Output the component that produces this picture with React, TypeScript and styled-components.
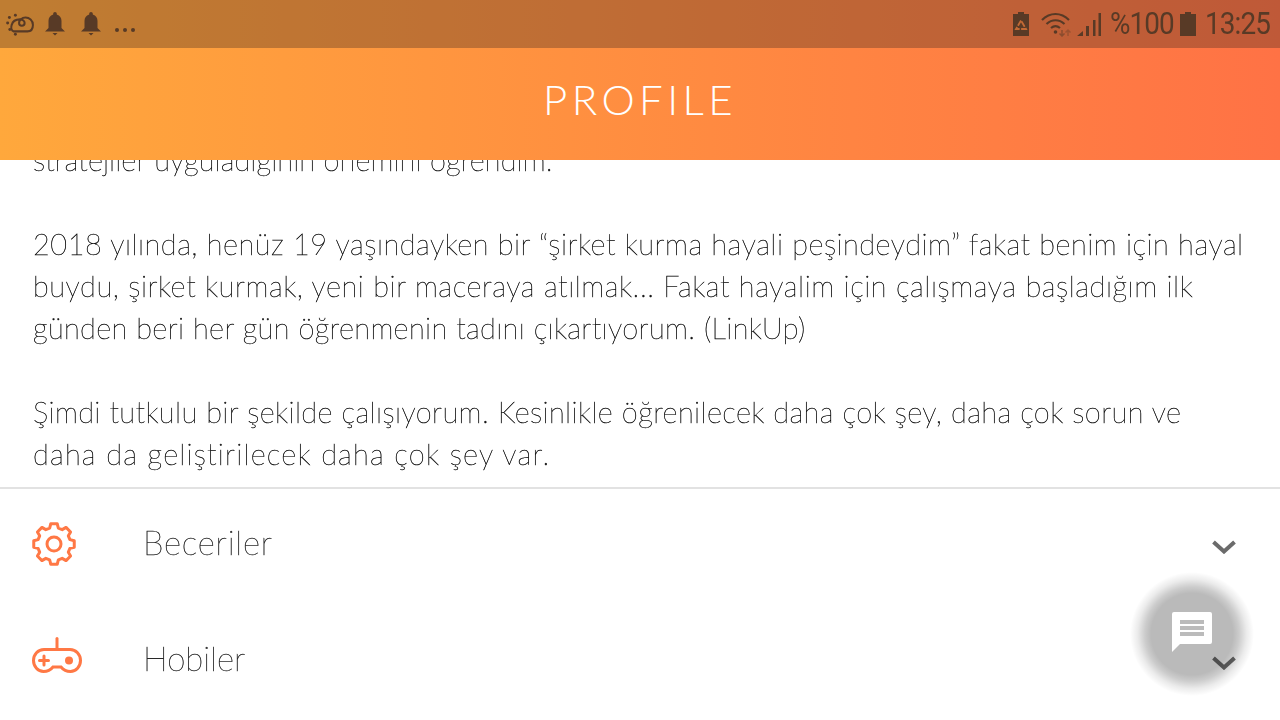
import { createGlobalStyle, styled } from 'styled-components';

const BODY_FONT = '"Lato", "Noto Sans", sans-serif';

const GlobalStyle = createGlobalStyle`
  html, body {
    margin: 0;
    padding: 0;
    background: #fff;
  }
`;

const Screen = styled.div`
  position: relative;
  width: 1280px;
  height: 720px;
  display: flex;
  flex-direction: column;
  overflow: hidden;
  background: #fff;
  font-family: ${BODY_FONT};
`;

const TopArea = styled.div`
  background: linear-gradient(to right, #ffa83c, #ff7245);
  flex: none;
  position: relative;
  z-index: 1;
`;

const StatusBar = styled.div`
  height: 48px;
  display: flex;
  align-items: center;
  justify-content: space-between;
  padding: 0 10px 0 5px;
  background: rgba(60, 40, 30, 0.33);
  color: #583a26;
`;

const StatusGroup = styled.div`
  display: flex;
  align-items: center;
`;

const Slot = styled.div<{ $w: number }>`
  width: ${(props) => props.$w}px;
  display: flex;
  justify-content: center;
`;

const DotsSlot = styled.div`
  margin: 12px 0 0 8px;
  display: flex;
`;

const Spacer = styled.div<{ $w: number }>`
  width: ${(props) => props.$w}px;
`;

const StatusText = styled.span<{ $w: number }>`
  font-family: 'Roboto', sans-serif;
  font-size: 31px;
  letter-spacing: -1px;
  line-height: 48px;
  width: ${(props) => props.$w}px;
  white-space: nowrap;
  transform: scaleX(0.9);
  transform-origin: left center;
  display: inline-block;
`;

const Header = styled.header`
  height: 112px;
  display: flex;
  align-items: center;
  justify-content: center;
  color: #fff;
  font-size: 42px;
  font-weight: 300;
  letter-spacing: 4.4px;
  padding-bottom: 10px;
  box-sizing: border-box;
`;

const Content = styled.section`
  flex: none;
  height: 329px;
  overflow: hidden;
  display: flex;
  flex-direction: column;
  justify-content: flex-end;
  padding: 0 33px 12px;
  box-sizing: border-box;
  border-bottom: 2px solid #e2e2e2;
  filter: grayscale(1);
`;

const Line = styled.div<{ $spacing?: number }>`
  flex: none;
  height: 42px;
  line-height: 42px;
  font-size: 29px;
  font-weight: 100;
  color: #111;
  -webkit-text-stroke: 0.4px #111;
  white-space: nowrap;
  letter-spacing: ${(props) => props.$spacing ?? 0.6}px;
`;

const Row = styled.div`
  flex: none;
  height: 116px;
  display: flex;
  align-items: center;
  padding: 0 44px 6px 30px;
  box-sizing: border-box;
`;

const RowIcon = styled.div`
  width: 113px;
  display: flex;
  align-items: center;
`;

const RowLabel = styled.div<{ $spacing: number }>`
  flex: 1;
  font-size: 33px;
  font-weight: 100;
  color: #1f2a2a;
  -webkit-text-stroke: 0.4px #1f2a2a;
  letter-spacing: ${(props) => props.$spacing}px;
  margin-bottom: 4px;
  filter: grayscale(1);
`;

const ChevronSlot = styled.div`
  margin-top: 5px;
  display: flex;
`;

const Fab = styled.button`
  position: absolute;
  left: 1130px;
  top: 572px;
  width: 124px;
  height: 124px;
  border: none;
  border-radius: 50%;
  background: radial-gradient(
    circle closest-side,
    rgba(0, 0, 0, 0.27) 66%,
    rgba(0, 0, 0, 0.2) 76%,
    rgba(0, 0, 0, 0.08) 88%,
    rgba(0, 0, 0, 0) 100%
  );
  display: flex;
  align-items: center;
  justify-content: center;
  padding: 0 0 4px;
  box-sizing: border-box;
`;

function gearPath(cx: number, cy: number, outer: number, inner: number, teeth: number) {
  const pts: string[] = [];
  const step = (Math.PI * 2) / teeth;
  for (let i = 0; i < teeth; i++) {
    const a = i * step - Math.PI / 2;
    const at = (r: number, o: number) =>
      `${(cx + r * Math.cos(a + o * step)).toFixed(2)} ${(cy + r * Math.sin(a + o * step)).toFixed(2)}`;
    pts.push(`${at(inner, -0.34)} ${at(outer, -0.2)} ${at(outer, 0.2)} ${at(inner, 0.34)}`);
  }
  return `M${pts.join(' L')} Z`;
}

const GearIcon = () => (
  <svg width="48" height="48" viewBox="0 0 48 48" fill="none" stroke="#ff7845" strokeWidth="3" strokeLinejoin="round">
    <path d={gearPath(24, 24, 20.5, 16.5, 8)} />
    <circle cx="24" cy="24" r="7" />
  </svg>
);

const GamepadIcon = () => (
  <svg width="54" height="46" viewBox="0 0 54 46" fill="none" stroke="#ff7845" strokeWidth="3" strokeLinecap="round">
    <path d="M27 1.500v11" />
    <path d="M14 12.500h26c6 0 10.500 5 10.500 11s-4.500 11-10 11c-4.500 0-7.500-2-9.500-4.500h-8c-2 2.500-5 4.500-9.500 4.500-5.500 0-10-5-10-11s4.500-11 10.500-11z" />
    <path d="M9.500 23.500h9M14 19v9" />
    <circle cx="39" cy="23.500" r="4" fill="#ff7845" stroke="none" />
  </svg>
);

const Chevron = () => (
  <svg width="24" height="14" viewBox="0 0 24 14" fill="none" stroke="#6b6b6b" strokeWidth="4">
    <path d="M1.500 2l10.500 9.500L22.500 2" />
  </svg>
);

const ChatIcon = () => (
  <svg width="40" height="40" viewBox="0 0 40 40">
    <path fill="#fff" d="M2 0h36a2 2 0 0 1 2 2v28a2 2 0 0 1-2 2H8l-8 8V2a2 2 0 0 1 2-2z" />
    <path fill="#bbb" d="M8 8h24v4H8zM8 14h24v4H8zM8 20h24v4H8z" />
  </svg>
);

const WeatherIcon = () => (
  <svg width="28" height="24" viewBox="0 0 30 26" fill="none" stroke="currentColor" strokeWidth="2.200">
    <path d="M8 21h15c4 0 6-3 6-7 0-5-4-8-8-8-4 0-7 3-7 6 0 2 1 3 3 3s3-1 3-3c0-2-2-4-5-4-4 0-8 2-9 6-1 3 0 6 2 7z" />
    <g fill="currentColor" stroke="none">
      <circle cx="10" cy="3.500" r="1.600" />
      <circle cx="3.500" cy="6" r="1.600" />
      <circle cx="1.600" cy="12" r="1.600" />
      <circle cx="4" cy="19" r="1.600" />
      <circle cx="10" cy="24" r="1.600" />
    </g>
  </svg>
);

const BellIcon = () => (
  <svg width="20" height="24" viewBox="0 0 20 24" fill="currentColor">
    <path d="M10 0c1 0 1.800.8 1.800 1.800v.7C15 3.500 16.500 6 16.500 9v7l3.500 3.500H0L3.500 16V9C3.500 6 5 3.500 8.200 2.500v-.7C8.200.8 9 0 10 0z" />
    <path d="M7.500 21h5l-2.500 2.500z" />
  </svg>
);

const Dots = () => (
  <svg width="20" height="6" viewBox="0 0 20 6" fill="currentColor">
    <circle cx="2" cy="3" r="2" />
    <circle cx="10" cy="3" r="2" />
    <circle cx="18" cy="3" r="2" />
  </svg>
);

const BatterySaverIcon = () => (
  <svg width="16" height="24" viewBox="0 0 16 24">
    <path fill="currentColor" d="M5 0h6v2h5v22H0V2h5z" />
    <path fill="none" stroke="#c26a35" strokeWidth="1.800" strokeDasharray="6 1.500" d="M8 8.500l-5 8.500h10z" />
  </svg>
);

const WifiIcon = () => (
  <svg width="30" height="26" viewBox="0 0 30 26" fill="none" stroke="currentColor" strokeWidth="2.200">
    <path d="M1 9c8-8 19-8 27 0M5.500 13c5.500-5 12.500-5 18 0M10 17c3-2.500 6-2.500 9 0" />
    <circle cx="14.500" cy="21" r="1.800" fill="currentColor" stroke="none" />
    <path d="M21 19v6M18.500 22.500l2.500 2.500 2.500-2.500" strokeWidth="1.500" opacity="0.5" />
    <path d="M27 25v-6M24.500 21.500l2.500-2.500 2.500 2.500" strokeWidth="1.500" opacity="0.35" />
  </svg>
);

const SignalIcon = () => (
  <svg width="24" height="24" viewBox="0 0 24 24" fill="currentColor">
    <path d="M0 24l6-5v5zM9 14h3v10H9zM16 8h2.500v16H16zM21.500 1H24v23h-2.500z" />
  </svg>
);

const BatteryIcon = () => (
  <svg width="16" height="24" viewBox="0 0 16 24" fill="currentColor">
    <path d="M5 0h6v2h5v22H0V2h5z" />
  </svg>
);

export default function App() {
  return (
    <Screen>
      <GlobalStyle />
      <TopArea>
        <StatusBar>
          <StatusGroup>
            <Slot $w={30}><WeatherIcon /></Slot>
            <Slot $w={40}><BellIcon /></Slot>
            <Slot $w={32}><BellIcon /></Slot>
            <DotsSlot><Dots /></DotsSlot>
          </StatusGroup>
          <StatusGroup>
            <BatterySaverIcon />
            <Spacer $w={12} />
            <WifiIcon />
            <Spacer $w={6} />
            <SignalIcon />
            <Spacer $w={9} />
            <StatusText $w={70}>%100</StatusText>
            <BatteryIcon />
            <Spacer $w={9} />
            <StatusText $w={65}>13:25</StatusText>
          </StatusGroup>
        </StatusBar>
        <Header>PROFILE</Header>
      </TopArea>
      <Content>
        <Line $spacing={0.1}>stratejiler uyguladığının önemini öğrendim.</Line>
        <Line />
        <Line $spacing={0.5}>2018 yılında, henüz 19 yaşındayken bir “şirket kurma hayali peşindeydim” fakat benim için hayal</Line>
        <Line $spacing={0.56}>buydu, şirket kurmak, yeni bir maceraya atılmak... Fakat hayalim için çalışmaya başladığım ilk</Line>
        <Line $spacing={0.35}>günden beri her gün öğrenmenin tadını çıkartıyorum. (LinkUp)</Line>
        <Line />
        <Line $spacing={0.4}>Şimdi tutkulu bir şekilde çalışıyorum. Kesinlikle öğrenilecek daha çok şey, daha çok sorun ve</Line>
        <Line $spacing={1.2}>daha da geliştirilecek daha çok şey var.</Line>
      </Content>
      <Row>
        <RowIcon><GearIcon /></RowIcon>
        <RowLabel $spacing={0.8}>Beceriler</RowLabel>
        <ChevronSlot><Chevron /></ChevronSlot>
      </Row>
      <Row>
        <RowIcon><GamepadIcon /></RowIcon>
        <RowLabel $spacing={0}>Hobiler</RowLabel>
        <ChevronSlot><Chevron /></ChevronSlot>
      </Row>
      <Fab><ChatIcon /></Fab>
    </Screen>
  );
}
